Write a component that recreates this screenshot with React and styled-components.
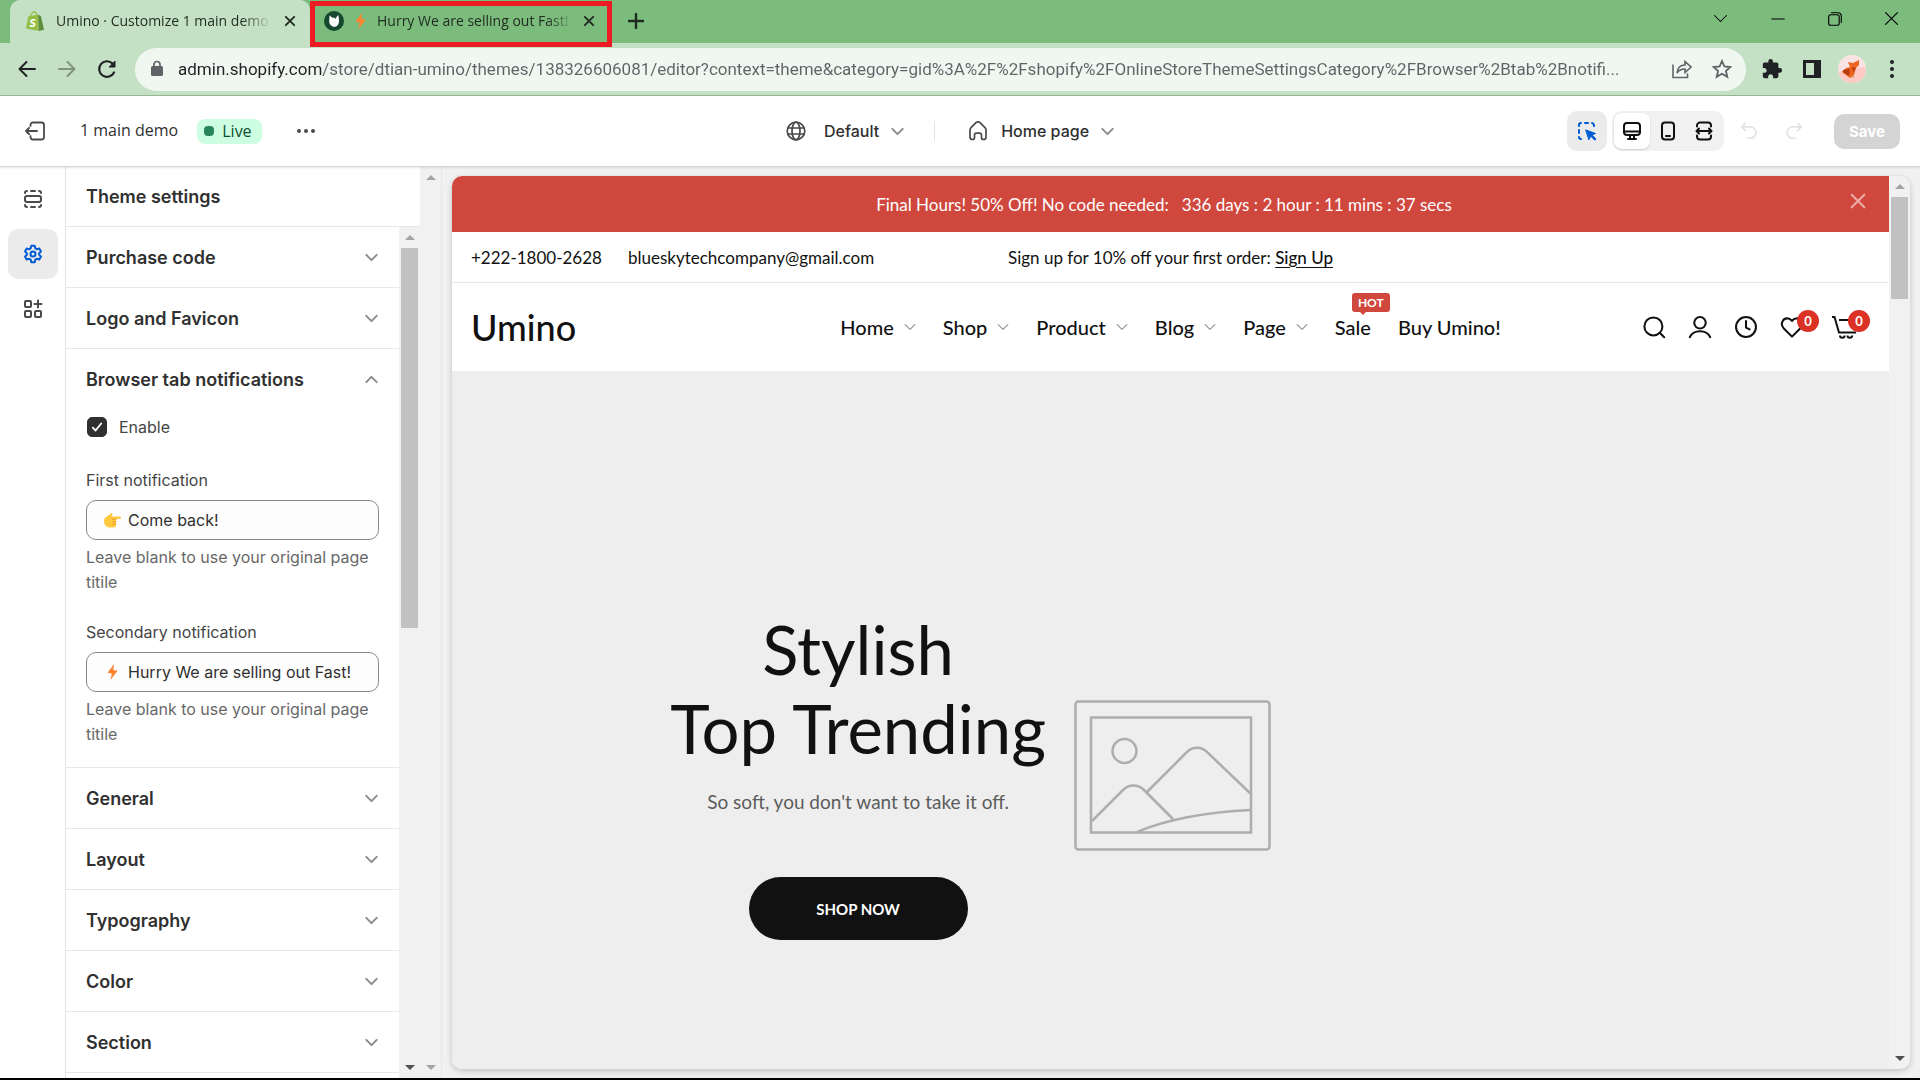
import React, { useState } from 'react';
import styled, { createGlobalStyle } from 'styled-components';

const GlobalStyle = createGlobalStyle`
    * {
        box-sizing: border-box;
    }

    body {
        margin: 0;
        background-color: #f0f0f0;
        font-family: Inter, "Liberation Sans", sans-serif;
    }

    button, input {
        font: inherit;
        color: inherit;
        border: none;
        padding: 0;
        background: none;
    }

    svg {
        display: block;
        flex: none;
    }
`;

const Screen = styled.div`
    height: 100vh;
    display: flex;
    flex-direction: column;
    overflow: hidden;
    border-bottom: 2px solid #000;
`;

/* ---------- browser window ---------- */

const TabStrip = styled.div`
    height: 43px;
    display: flex;
    align-items: stretch;
    padding-left: 10px;
    background-color: #7bbb7c;
    color: #1f2a20;
    font-family: "Open Sans", "Noto Sans", sans-serif;
`;

const Tab = styled.div`
    position: relative;
    display: flex;
    align-items: center;
    gap: ${({ $active }) => ($active ? '12px' : '8px')};
    width: ${({ $active }) => ($active ? '300px' : '302px')};
    padding: ${({ $active }) => ($active ? '0 14px 2px 16px' : '0 17px 2px 14px')};
    border-radius: 10px 10px 0 0;
    background-color: ${({ $active }) => ($active ? '#c5e1c5' : 'transparent')};
`;

const TabTitle = styled.span`
    flex: 1;
    min-width: 0;
    overflow: hidden;
    white-space: nowrap;
    font-size: 14px;
    line-height: 20px;
    mask-image: linear-gradient(to right, #000 86%, transparent);
`;

const Highlight = styled.div`
    position: absolute;
    inset: 1px 0 -4px;
    border: 5px solid #ed1c24;
    pointer-events: none;
    z-index: 1;
`;

const IconButton = styled.button`
    display: flex;
    align-items: center;
    justify-content: center;
    width: ${({ $w }) => $w || 24}px;
    height: ${({ $h }) => $h || 24}px;
    flex: none;
    cursor: pointer;
    color: ${({ $color }) => $color || 'inherit'};
`;

const WindowButtons = styled.div`
    display: flex;
    margin-left: auto;
    height: 37px;
    color: #000;
`;

const Toolbar = styled.div`
    height: 53px;
    display: flex;
    align-items: center;
    padding: 0 14px 0 11px;
    background-color: #c5e1c5;
    border-bottom: 1px solid #97b698;
    color: #202124;
`;

const NavButtons = styled.div`
    display: flex;
    gap: 8px;
    margin-right: 12px;
`;

const Omnibox = styled.div`
    flex: 1;
    display: flex;
    align-items: center;
    height: 43px;
    padding: 0 4px 0 14px;
    border-radius: 22px;
    background-color: #f0f7f0;
    color: #5f6368;
`;

const Address = styled.input`
    flex: 1;
    min-width: 0;
    height: 32px;
    margin: 0 4px 0 13px;
    outline: none;
    font-family: Roboto, "Open Sans", sans-serif;
    font-size: 17px;
    color: transparent;
    background: linear-gradient(to right, #202124 144px, #5f6368 144px);
    background-clip: text;
`;

const Extensions = styled.div`
    display: flex;
    align-items: center;
    gap: 12px;
    padding-left: 12px;
`;

/* ---------- editor header ---------- */

const Header = styled.header`
    height: 71px;
    flex: none;
    display: grid;
    grid-template-columns: 1fr auto 1fr;
    align-items: center;
    padding: 0 20px;
    background-color: #fff;
    border-bottom: 1px solid #d5d5d5;
    box-shadow: 0 1px 2px rgba(0, 0, 0, 0.1);
    color: #303030;
    z-index: 1;
`;

const HeaderLeft = styled.div`
    display: flex;
    align-items: center;
    color: #4a4a4a;
`;

const ThemeName = styled.span`
    margin: 0 19px 2px 30px;
    font-family: "Open Sans", "Noto Sans", sans-serif;
    font-size: 16px;
    color: #303030;
`;

const Badge = styled.span`
    display: flex;
    align-items: center;
    gap: 8px;
    height: 25px;
    padding: 0 10px 0 7px;
    margin-right: 32px;
    border-radius: 8px;
    background-color: #cdfee1;
    color: #0c5132;
    font-family: "Open Sans", "Noto Sans", sans-serif;
    font-size: 16px;

    &::before {
        content: '';
        width: 10px;
        height: 10px;
        border-radius: 4px;
        background-color: #29845a;
    }
`;

const HeaderCenter = styled.div`
    display: flex;
    align-items: center;
    padding-right: 20px;
`;

const Picker = styled.button`
    display: flex;
    align-items: center;
    gap: ${({ $gap }) => $gap}px;
    cursor: pointer;
    font-size: 16px;
    font-weight: 500;
    line-height: 24px;

    svg:last-child {
        margin-left: ${({ $gap }) => 12 - $gap}px;
        color: #8a8a8a;
    }
`;

const Divider = styled.span`
    width: 1px;
    height: 20px;
    margin: 0 33px 0 30px;
    background-color: #e3e3e3;
`;

const HeaderRight = styled.div`
    display: flex;
    align-items: center;
    justify-content: flex-end;
`;

const InspectButton = styled.button`
    display: flex;
    align-items: center;
    justify-content: center;
    width: 40px;
    height: 40px;
    margin-right: 5px;
    border-radius: 10px;
    background-color: #ebebeb;
    color: #005bd3;
    cursor: pointer;
`;

const Viewports = styled.div`
    display: flex;
    align-items: center;
    width: 112px;
    height: 40px;
    padding: 0 2px;
    border-radius: 10px;
    background-color: #f1f1f1;
    color: #111;
`;

const ViewportButton = styled.button`
    display: flex;
    align-items: center;
    justify-content: center;
    flex: 1;
    height: 36px;
    border-radius: 8px;
    cursor: pointer;
    background-color: ${({ $on }) => ($on ? '#fff' : 'transparent')};
    box-shadow: ${({ $on }) => ($on ? '0 1px 2px rgba(0, 0, 0, 0.15)' : 'none')};
`;

const History = styled.div`
    display: flex;
    gap: 21px;
    margin: 0 28px 0 13px;
    color: #e3e3e3;
`;

const SaveButton = styled.button`
    width: 66px;
    height: 35px;
    border-radius: 10px;
    background-color: #d4d4d4;
    color: #fff;
    font-size: 15px;
    font-weight: 700;
`;

/* ---------- editor body ---------- */

const Body = styled.div`
    flex: 1;
    min-height: 0;
    display: flex;
`;

const Rail = styled.nav`
    width: 66px;
    flex: none;
    display: flex;
    flex-direction: column;
    align-items: center;
    gap: 5px;
    padding-top: 7px;
    background-color: #fff;
    border-right: 1px solid #e3e3e3;
    color: #4a4a4a;
`;

const RailButton = styled.button`
    display: flex;
    align-items: center;
    justify-content: center;
    width: 50px;
    height: 50px;
    border-radius: 10px;
    cursor: pointer;
    background-color: ${({ $on }) => ($on ? '#ebebeb' : 'transparent')};
    color: ${({ $on }) => ($on ? '#005bd3' : 'inherit')};
`;

const Sidebar = styled.aside`
    width: 354px;
    flex: none;
    display: flex;
    flex-direction: column;
    background-color: #fff;
`;

const SidebarTitle = styled.h2`
    margin: 0;
    padding: 18px 20px 17px;
    border-bottom: 1px solid #e8e8e8;
    font-size: 18px;
    font-weight: 600;
    line-height: 24px;
    color: #303030;
`;

const SidebarScroll = styled.div`
    flex: 1;
    min-height: 0;
    display: flex;
`;

const Sections = styled.div`
    flex: 1;
    overflow: hidden;
    color: #303030;
`;

const Section = styled.section`
    border-bottom: 1px solid #e8e8e8;
`;

const SectionToggle = styled.button`
    display: flex;
    align-items: center;
    justify-content: space-between;
    width: 100%;
    height: 60px;
    padding: 1px 21px 0 20px;
    font-size: 18px;
    font-weight: 600;
    line-height: 24px;
    cursor: pointer;

    svg {
        color: #8a8a8a;
    }
`;

const SectionBody = styled.div`
    padding: 5px 20px 20px;
    color: #454545;
    font-size: 16px;
    line-height: 25px;
`;

const CheckLabel = styled.label`
    position: relative;
    display: flex;
    align-items: center;
    gap: 12px;
    height: 26px;
    margin-bottom: 28px;
    padding-left: 1px;

    svg {
        position: absolute;
        left: 4px;
        color: #fff;
        pointer-events: none;
    }
`;

const Checkbox = styled.input`
    appearance: none;
    width: 20px;
    height: 20px;
    margin: 0;
    border: 1px solid #8a8a8a;
    border-radius: 5px;

    &:checked {
        background-color: #303030;
        border-color: #303030;
    }
`;

const Field = styled.div`
    & + & {
        margin-top: 25px;
    }
`;

const FieldLabel = styled.label`
    display: block;
    margin-bottom: 7px;
`;

const InputBox = styled.div`
    display: flex;
    align-items: center;
    gap: 7px;
    height: 40px;
    padding-left: 17px;
    border: 1px solid #8a8a8a;
    border-radius: 10px;
    background-color: #fdfdfd;
    color: #303030;
`;

const TextInput = styled.input`
    flex: 1;
    min-width: 0;
    outline: none;
    line-height: 24px;
`;

const Help = styled.p`
    margin: 5px 0 0;
    color: #686868;
`;

/* ---------- scrollbars ---------- */

const Track = styled.div`
    width: 21px;
    flex: none;
    display: flex;
    flex-direction: column;
    align-items: center;
    background-color: #f1f1f1;
`;

const Arrow = styled.span`
    height: 21px;
    flex: none;
    display: flex;
    align-items: center;

    &::before {
        content: '';
        border: 5px solid transparent;
        border-top-width: ${({ $down }) => ($down ? '5px' : '0')};
        border-bottom-width: ${({ $down }) => ($down ? '0' : '5px')};
        border-top-color: ${({ $dark }) => ($dark ? '#505050' : '#a3a3a3')};
        border-bottom-color: ${({ $dark }) => ($dark ? '#505050' : '#a3a3a3')};
    }
`;

const Rest = styled.div`
    flex: 1;
    min-height: 0;
    width: 17px;
`;

const Thumb = styled.div`
    width: 17px;
    height: ${({ $size }) => $size};
    background-color: #c1c1c1;
`;

/* ---------- store preview ---------- */

const Stage = styled.main`
    flex: 1;
    min-width: 0;
    display: flex;
    padding: 9px 10px;
    border-left: 1px solid #e6e6e6;
    background-color: #f1f1f1;
`;

const Preview = styled.div`
    flex: 1;
    min-width: 0;
    display: flex;
    border-radius: 10px;
    overflow: hidden;
    box-shadow: 0 2px 6px rgba(0, 0, 0, 0.2);
`;

const Store = styled.div`
    flex: 1;
    min-width: 0;
    display: flex;
    flex-direction: column;
    background-color: #fff;
    color: #111;
    font-family: Lato, "Open Sans", sans-serif;
`;

const ThreeColumns = styled.div`
    display: grid;
    grid-template-columns: 1fr auto 1fr;
    align-items: center;
    padding: 0 19px;
`;

const Announcement = styled(ThreeColumns)`
    height: 56px;
    background-color: #d0473e;
    color: #fff;
    font-size: 17px;
    white-space: pre;

    span {
        grid-column: 2;
        padding-right: 13px;
    }

    button {
        justify-self: end;
        margin-bottom: 6px;
    }
`;

const TopBar = styled(ThreeColumns)`
    height: 51px;
    border-bottom: 1px solid #e8e8e8;
    font-size: 17px;

    a {
        color: inherit;
    }
`;

const Contacts = styled.div`
    display: flex;
    gap: 26px;

    a {
        text-decoration: none;
    }
`;

const SignUp = styled.a`
    font-weight: 500;
    text-underline-offset: 3px;
`;

const StoreHeader = styled(ThreeColumns)`
    height: 88px;
`;

const Logo = styled.a`
    font-size: 36px;
    font-weight: 500;
    color: inherit;
    text-decoration: none;
`;

const Menu = styled.nav`
    display: flex;
    gap: 27px;
    font-size: 20px;
    font-weight: 500;
`;

const MenuLink = styled.a`
    position: relative;
    display: flex;
    align-items: center;
    gap: 10px;
    color: inherit;
    text-decoration: none;

    svg {
        color: #999;
    }
`;

const Hot = styled.span`
    position: absolute;
    left: 17px;
    bottom: 27px;
    width: 38px;
    height: 19px;
    border-radius: 3px;
    background-color: #d0473e;
    color: #fff;
    font-size: 12px;
    font-weight: 700;
    line-height: 19px;
    text-align: center;

    &::after {
        content: '';
        position: absolute;
        left: 8px;
        top: 19px;
        border: 3px solid transparent;
        border-top-color: #d0473e;
        border-bottom: none;
    }
`;

const StoreIcons = styled.div`
    display: flex;
    justify-content: flex-end;
    align-items: center;
    gap: 22px;
`;

const Counted = styled.div`
    position: relative;
    padding-right: ${({ $space }) => $space}px;
`;

const Count = styled.span`
    position: absolute;
    top: -5px;
    left: ${({ $left }) => $left}px;
    width: 22px;
    height: 22px;
    border-radius: 50%;
    background-color: #dc3226;
    color: #fff;
    font-size: 13px;
    font-weight: 700;
    line-height: 22px;
    text-align: center;
`;

const Hero = styled.div`
    flex: 1;
    min-height: 0;
    overflow: hidden;
    display: grid;
    grid-template-columns: 1fr auto 1fr;
    align-items: center;
    padding: 110px 0 0 4px;
    background-color: #eee;
`;

const HeroText = styled.div`
    justify-self: end;
    display: flex;
    flex-direction: column;
    align-items: center;
    margin-right: 28px;
    text-align: center;
`;

const HeroTitle = styled.h1`
    margin: 0;
    font-size: 67px;
    font-weight: 400;
    line-height: 79px;
`;

const HeroLead = styled.p`
    margin: 21px 0 62px;
    color: #5c5c5c;
    font-size: 19px;
    line-height: 26px;
`;

const ShopNow = styled.button`
    width: 219px;
    height: 63px;
    border-radius: 32px;
    background-color: #111;
    color: #fff;
    font-size: 15px;
    font-weight: 700;
    cursor: pointer;
`;

/* ---------- drawings ---------- */

const Stroke = ({ size = 20, width = 2, children, ...rest }) => (
    <svg width={size} height={size} viewBox="0 0 20 20" fill="none" stroke="currentColor" strokeWidth={width} strokeLinecap="round" strokeLinejoin="round" {...rest}>
        {children}
    </svg>
);

const Chevron = ({ up, size = 13, width = 3 }) => (
    <Stroke size={size} width={width}><path d={up ? 'M2 14l8-8 8 8' : 'M2 6l8 8 8-8'} /></Stroke>
);

const Cross = ({ size, width }) => (
    <Stroke size={size} width={width}><path d="M3 3l14 14M17 3L3 17" /></Stroke>
);

const ShopifyBag = () => (
    <svg width="18" height="20" viewBox="0 0 18 20">
        <path d="M2.2 5.4L12 3.6l.8 16.4L0 17.6z" fill="#95bf47" />
        <path d="M12 3.6l3 1.6L18 18.7 12.8 20z" fill="#5e8e3e" />
        <path d="M4.6 5.2C5.2 2.6 6.8.8 8.4.8c1.4 0 2.1 1.5 2.2 3.4" fill="none" stroke="#95bf47" strokeWidth="1.2" />
        <text x="3.4" y="15.5" fontFamily="Lato, sans-serif" fontSize="12" fontWeight="900" fontStyle="italic" fill="#fff">S</text>
    </svg>
);

const UminoFavicon = () => (
    <svg width="20" height="20" viewBox="0 0 20 20">
        <circle cx="10" cy="10" r="10" fill="#14482f" />
        <path d="M5.5 4.5l3 2.2h3.3L14.5 4l.5 6.5c0 3-2.2 5.3-4.8 5.3S5.2 13.3 5.2 10.3z" fill="#fff" />
        <circle cx="11.5" cy="7" r=".8" fill="#14482f" />
    </svg>
);

const Bolt = () => (
    <svg width="17" height="16" viewBox="0 0 17 16">
        <path d="M10 0L3.5 8.8l4.3.7L6.5 16 13.5 6.7 9.3 6z" fill="#ff822d" />
    </svg>
);

const PointingHand = () => (
    <svg width="17" height="16" viewBox="0 0 17 16">
        <path d="M0 8.5C0 6 2.5 4.6 4.7 3.2L7 1.2c1.3-.6 2 .6 1.2 1.6L7.3 4.5h8.5c1.5 0 1.5 2.3 0 2.4H12v7.2c-.5 1-1.5 1.3-3 1.3H5.5C2 15.4 0 12.5 0 8.5z" fill="#ffc83d" />
        <path d="M8 7.2h4.7M8.5 9.7h4M8.3 12.2h3.7" stroke="#e69a2b" fill="none" />
    </svg>
);

const Avatar = () => (
    <svg width="28" height="28" viewBox="0 0 28 28">
        <circle cx="14" cy="14" r="14" fill="#f9e3e3" />
        <path d="M.5 17L12 14l14-2 2 3c-1 8-7 13-14 13S1.5 23.5.5 17z" fill="#ffc9c4" />
        <path d="M10 7l5 1 6-3v5l-3 3-2 7-4 3-8-6 4-4 4-1z" fill="#ee6420" />
        <path d="M5 15l7-1-1 7-6-4zM14 12l4 1-3 4z" fill="#b53a0c" />
        <path d="M12 22l4-2v3z" fill="#d9a066" />
    </svg>
);

const Placeholder = () => (
    <svg width="197" height="151" viewBox="0 0 197 151" fill="none" stroke="#adadad" strokeWidth="2.5">
        <rect x="1.5" y="1.5" width="194" height="148" rx="3" />
        <rect x="17" y="17.5" width="160" height="115" />
        <circle cx="50.5" cy="51" r="12" />
        <path d="M18 121l31-31c6-6 15-6 21 0l29 29M72 93l40-40c6-7 16-7 22 0l43 41M63 132c33-14 72-20 114-22" />
    </svg>
);

/* ---------- page ---------- */

const menu = ['Home', 'Shop', 'Product', 'Blog', 'Page'];

function Browser() {
    const [url, setUrl] = useState('admin.shopify.com/store/dtian-umino/themes/138326606081/editor?context=theme&category=gid%3A%2F%2Fshopify%2FOnlineStoreThemeSettingsCategory%2FBrowser%2Btab%2Bnotifi...');

    return (
        <>
            <TabStrip>
                <Tab $active>
                    <ShopifyBag />
                    <TabTitle>Umino · Customize 1 main demo</TabTitle>
                    <IconButton $w={12} aria-label="Close tab"><Cross size={12} width={3} /></IconButton>
                </Tab>
                <Tab>
                    <UminoFavicon />
                    <Bolt />
                    <TabTitle>Hurry We are selling out Fast!</TabTitle>
                    <IconButton $w={12} aria-label="Close tab"><Cross size={12} width={3} /></IconButton>
                    <Highlight />
                </Tab>
                <IconButton $w={48} $h={42} aria-label="New tab">
                    <Stroke size={16} width={3}><path d="M10 1v18M1 10h18" /></Stroke>
                </IconButton>
                <WindowButtons>
                    <IconButton $w={57} $h={37} aria-label="Search tabs"><Chevron size={15} width={1.4} /></IconButton>
                    <IconButton $w={57} $h={37} aria-label="Minimize"><Stroke size={14} width={1.5}><path d="M1 10h18" /></Stroke></IconButton>
                    <IconButton $w={57} $h={37} aria-label="Restore">
                        <Stroke size={14} width={1.6}><rect x="1" y="4" width="15" height="15" rx="3" /><path d="M5 1h9c3 0 5 2 5 5v9" /></Stroke>
                    </IconButton>
                    <IconButton $w={57} $h={37} aria-label="Close"><Cross size={17} width={1.4} /></IconButton>
                </WindowButtons>
            </TabStrip>
            <Toolbar>
                <NavButtons>
                    <IconButton $w={32} $h={32} aria-label="Back">
                        <Stroke><path d="M18 10H2.5M9.5 3l-7 7 7 7" /></Stroke>
                    </IconButton>
                    <IconButton $w={32} $h={32} $color="#80937f" aria-label="Forward">
                        <Stroke><path d="M2 10h15.5M10.5 3l7 7-7 7" /></Stroke>
                    </IconButton>
                    <IconButton $w={32} $h={32} aria-label="Reload">
                        <Stroke width={2.2}><path d="M17 13.5A7.8 7.8 0 1 1 15.5 4.5" /><path d="M18 2.5v5.5h-5.5z" fill="currentColor" strokeWidth="1" /></Stroke>
                    </IconButton>
                </NavButtons>
                <Omnibox>
                    <svg width="16" height="18" viewBox="0 0 16 18">
                        <rect x="2" y="6" width="12" height="10" rx="1.5" fill="currentColor" />
                        <path d="M5 7V4.5a3 3 0 0 1 6 0V7" fill="none" stroke="currentColor" strokeWidth="1.7" />
                    </svg>
                    <Address aria-label="Address" value={url} onChange={(e) => setUrl(e.target.value)} />
                    <IconButton $w={40} aria-label="Share">
                        <Stroke width={1.6}><path d="M1 6v12.5h14.5V15M5 14c.5-5 3-8 8-8V2.5L19 8l-6 5.5V10c-4 0-6 1-8 4z" strokeLinejoin="miter" /></Stroke>
                    </IconButton>
                    <IconButton $w={40} aria-label="Bookmark">
                        <Stroke width={1.8}><path d="M10 2l2.4 5.5 6 .5-4.5 4 1.4 5.8L10 14.7l-5.3 3.1L6.1 12 1.6 8l6-.5z" strokeLinejoin="miter" /></Stroke>
                    </IconButton>
                </Omnibox>
                <Extensions>
                    <IconButton $w={28} $h={28} aria-label="Extensions">
                        <svg width="22" height="22" viewBox="0 0 24 24" fill="currentColor">
                            <path d="M20.5 11H19V7c0-1.1-.9-2-2-2h-4V3.5a2.5 2.5 0 0 0-5 0V5H4c-1.1 0-2 .9-2 2v3.8h1.5c1.5 0 2.7 1.2 2.7 2.7S5 16.2 3.5 16.2H2V20c0 1.1.9 2 2 2h3.8v-1.5c0-1.5 1.2-2.7 2.7-2.7s2.7 1.2 2.7 2.7V22H17c1.1 0 2-.9 2-2v-4h1.5a2.5 2.5 0 0 0 0-5z" />
                        </svg>
                    </IconButton>
                    <IconButton $w={28} $h={28} aria-label="Side panel">
                        <svg width="18" height="18" viewBox="0 0 18 18" fill="currentColor"><path fillRule="evenodd" d="M0 0h18v18H0zM3 3v12h8V3z" /></svg>
                    </IconButton>
                    <IconButton $w={28} $h={28} aria-label="Profile"><Avatar /></IconButton>
                    <IconButton $w={28} $h={28} aria-label="Menu">
                        <svg width="4" height="18" viewBox="0 0 4 18" fill="currentColor"><circle cx="2" cy="2" r="2" /><circle cx="2" cy="9" r="2" /><circle cx="2" cy="16" r="2" /></svg>
                    </IconButton>
                </Extensions>
            </Toolbar>
        </>
    );
}

function EditorHeader() {
    return (
        <Header>
            <HeaderLeft>
                <IconButton $w={30} aria-label="Exit">
                    <Stroke width={1.8}><path d="M5.5 5V4A2.5 2.5 0 0 1 8 1.5h8.5A2.5 2.5 0 0 1 19 4v12a2.5 2.5 0 0 1-2.5 2.5H8A2.5 2.5 0 0 1 5.5 16v-1M12 10H1M4 7l-3 3 3 3" /></Stroke>
                </IconButton>
                <ThemeName>1 main demo</ThemeName>
                <Badge>Live</Badge>
                <IconButton aria-label="More actions">
                    <svg width="18" height="4" viewBox="0 0 18 4" fill="currentColor"><circle cx="2" cy="2" r="2" /><circle cx="9" cy="2" r="2" /><circle cx="16" cy="2" r="2" /></svg>
                </IconButton>
            </HeaderLeft>
            <HeaderCenter>
                <Picker $gap={18}>
                    <Stroke width={1.7} color="#4a4a4a"><circle cx="10" cy="10" r="8.8" /><ellipse cx="10" cy="10" rx="4" ry="8.8" /><path d="M2 7h16M2 13h16" /></Stroke>
                    Default
                    <Chevron />
                </Picker>
                <Divider />
                <Picker $gap={13}>
                    <Stroke width={1.7} color="#4a4a4a"><path d="M2 9.2c0-1 .3-1.8 1-2.5l5-5a2.8 2.8 0 0 1 4 0l5 5c.7.7 1 1.5 1 2.5V16a2.5 2.5 0 0 1-2.5 2.5c-1.4 0-2-.8-2-2V14a1.8 1.8 0 0 0-1.8-1.8H8.3A1.8 1.8 0 0 0 6.5 14v2.5c0 1.2-.6 2-2 2A2.5 2.5 0 0 1 2 16z" /></Stroke>
                    Home page
                    <Chevron />
                </Picker>
            </HeaderCenter>
            <HeaderRight>
                <InspectButton aria-label="Inspector">
                    <Stroke><path d="M2 5V4a2 2 0 0 1 2-2M8 2h3M15 2a2.5 2.5 0 0 1 2 2v1M2 9v3M2 16a2 2 0 0 0 2 2" /><path d="M9 9l9.5 3.5L15 14l4 4-1.2 1.2-4-4-1.8 3.3z" fill="currentColor" strokeWidth="1" /></Stroke>
                </InspectButton>
                <Viewports>
                    <ViewportButton $on aria-label="Desktop">
                        <Stroke><rect x="2" y="2" width="16" height="12" rx="3" /><path d="M2 10.5h16M8 14v3.5M12 14v3.5M6 18h8" /></Stroke>
                    </ViewportButton>
                    <ViewportButton aria-label="Mobile">
                        <Stroke><rect x="4" y="1.5" width="12" height="17" rx="3" /><path d="M8 15h4" /></Stroke>
                    </ViewportButton>
                    <ViewportButton aria-label="Fullscreen">
                        <Stroke><path d="M3 5.5v-1a3 3 0 0 1 3-3h8a3 3 0 0 1 3 3v1M3 14.5v1a3 3 0 0 0 3 3h8a3 3 0 0 0 3-3v-1M3 10h14M5 7.5L2.5 10 5 12.5M15 7.5l2.5 2.5-2.5 2.5" /></Stroke>
                    </ViewportButton>
                </Viewports>
                <History>
                    <IconButton disabled aria-label="Undo"><Stroke size={18}><path d="M5.5 1.5L2 5.5l4 4M2.5 5.5h9a6 6 0 0 1 0 12.5H9" /></Stroke></IconButton>
                    <IconButton disabled aria-label="Redo"><Stroke size={18}><path d="M14.5 1.5l3.5 4-4 4M17.5 5.5h-9a6 6 0 0 0 0 12.5H11" /></Stroke></IconButton>
                </History>
                <SaveButton disabled>Save</SaveButton>
            </HeaderRight>
        </Header>
    );
}

function Notification({ id, label, icon, initial }) {
    const [value, setValue] = useState(initial);

    return (
        <Field>
            <FieldLabel htmlFor={id}>{label}</FieldLabel>
            <InputBox>
                {icon}
                <TextInput id={id} value={value} onChange={(e) => setValue(e.target.value)} />
            </InputBox>
            <Help>Leave blank to use your original page titile</Help>
        </Field>
    );
}

function ThemeSettings() {
    const [enabled, setEnabled] = useState(true);

    return (
        <Sidebar>
            <SidebarTitle>Theme settings</SidebarTitle>
            <SidebarScroll>
                <Sections>
                    {['Purchase code', 'Logo and Favicon'].map(name => (
                        <Section key={name}><SectionToggle>{name}<Chevron /></SectionToggle></Section>
                    ))}
                    <Section>
                        <SectionToggle aria-expanded="true">Browser tab notifications<Chevron up /></SectionToggle>
                        <SectionBody>
                            <CheckLabel>
                                <Checkbox type="checkbox" checked={enabled} onChange={() => setEnabled(!enabled)} />
                                {enabled && <Stroke size={14} width={2.6}><path d="M4 11l4 4 8-10" /></Stroke>}
                                Enable
                            </CheckLabel>
                            <Notification id="first" label="First notification" icon={<PointingHand />} initial="Come back!" />
                            <Notification id="second" label="Secondary notification" icon={<Bolt />} initial="Hurry We are selling out Fast!" />
                        </SectionBody>
                    </Section>
                    {['General', 'Layout', 'Typography', 'Color', 'Section'].map(name => (
                        <Section key={name}><SectionToggle>{name}<Chevron /></SectionToggle></Section>
                    ))}
                </Sections>
                <Track>
                    <Arrow />
                    <Rest><Thumb $size="47%" /></Rest>
                    <Arrow $down $dark />
                </Track>
            </SidebarScroll>
        </Sidebar>
    );
}

function StorePreview() {
    return (
        <Preview>
            <Store>
                <Announcement>
                    <span>Final Hours! 50% Off! No code needed:   336 days : 2 hour : 11 mins : 37 secs</span>
                    <IconButton $color="#eda9a5" aria-label="Dismiss"><Cross size={18} width={2.4} /></IconButton>
                </Announcement>
                <TopBar>
                    <Contacts>
                        <a href="#phone">+222-1800-2628</a>
                        <a href="#email">blueskytechcompany@gmail.com</a>
                    </Contacts>
                    <span>Sign up for 10% off your first order: <SignUp href="#signup">Sign Up</SignUp></span>
                </TopBar>
                <StoreHeader>
                    <Logo href="#home">Umino</Logo>
                    <Menu>
                        {menu.map(item => (
                            <MenuLink key={item} href={`#${item}`}>{item}<Chevron size={12} width={2} /></MenuLink>
                        ))}
                        <MenuLink href="#sale">Sale<Hot>HOT</Hot></MenuLink>
                        <MenuLink href="#buy">Buy Umino!</MenuLink>
                    </Menu>
                    <StoreIcons>
                        <IconButton aria-label="Search"><Stroke size={24} width={1.7}><circle cx="9.5" cy="9.5" r="7.5" /><path d="M15 15l3.5 3.5" /></Stroke></IconButton>
                        <IconButton aria-label="Account"><Stroke size={24} width={1.7}><circle cx="10" cy="6.5" r="4.8" /><path d="M1.5 18.5c1.5-3.5 4.5-5 8.5-5s7 1.5 8.5 5" /></Stroke></IconButton>
                        <IconButton aria-label="Recently viewed"><Stroke size={24} width={1.7}><circle cx="10" cy="10" r="8.3" /><path d="M10 5v5.5l3 1.5" /></Stroke></IconButton>
                        <Counted $space={6}>
                            <IconButton aria-label="Wishlist"><Stroke size={24} width={1.7}><path d="M10 18L3 11C-.5 7 3 2 7 3c1.5.3 2.3 1 3 2 .7-1 1.5-1.7 3-2 4-1 7.5 4 4 8z" /></Stroke></IconButton>
                            <Count $left={17}>0</Count>
                        </Counted>
                        <Counted $space={0}>
                            <IconButton $w={38} aria-label="Cart">
                                <svg width="38" height="24" viewBox="0 0 38 24" fill="none" stroke="currentColor" strokeWidth="2">
                                    <path d="M0 2h2.5L7 17.5h17M7 5h15M8 20.5a2.3 2.3 0 0 0 4.6 0M15.5 20.5a2.3 2.3 0 0 0 4.6 0" />
                                </svg>
                            </IconButton>
                            <Count $left={16}>0</Count>
                        </Counted>
                    </StoreIcons>
                </StoreHeader>
                <Hero>
                    <HeroText>
                        <HeroTitle>Stylish<br />Top Trending</HeroTitle>
                        <HeroLead>So soft, you don't want to take it off.</HeroLead>
                        <ShopNow>SHOP NOW</ShopNow>
                    </HeroText>
                    <Placeholder />
                </Hero>
            </Store>
            <Track>
                <Arrow />
                <Rest><Thumb $size="12%" /></Rest>
                <Arrow $down $dark />
            </Track>
        </Preview>
    );
}

function App() {
    return (
        <Screen>
            <GlobalStyle />
            <Browser />
            <EditorHeader />
            <Body>
                <Rail>
                    <RailButton aria-label="Sections">
                        <Stroke><rect x="2" y="7" width="16" height="6" rx="2" /><path d="M2 4a2 2 0 0 1 2-2M8 2h4M16 2a2 2 0 0 1 2 2M2 16a2 2 0 0 0 2 2M8 18h4M16 18a2 2 0 0 0 2-2" /></Stroke>
                    </RailButton>
                    <RailButton $on aria-label="Theme settings">
                        <Stroke><circle cx="10" cy="10" r="2.5" /><path d="M8.3 1.8h3.4l.6 2.5 1.5.9 2.5-.7L18 7.4l-1.8 1.8v1.6l1.8 1.8-1.7 2.9-2.5-.7-1.5.9-.6 2.5H8.3l-.6-2.5-1.5-.9-2.5.7L2 12.6l1.8-1.8V9.2L2 7.4l1.7-2.9 2.5.7 1.5-.9z" /></Stroke>
                    </RailButton>
                    <RailButton aria-label="Apps">
                        <Stroke><rect x="2" y="2" width="6" height="6" rx="1" /><rect x="2" y="12" width="6" height="6" rx="1" /><rect x="12" y="12" width="6" height="6" rx="1" /><path d="M15 1.5v7M11.5 5h7" /></Stroke>
                    </RailButton>
                </Rail>
                <ThemeSettings />
                <Track>
                    <Arrow />
                    <Rest />
                    <Arrow $down />
                </Track>
                <Stage>
                    <StorePreview />
                </Stage>
            </Body>
        </Screen>
    );
}

export default App;
